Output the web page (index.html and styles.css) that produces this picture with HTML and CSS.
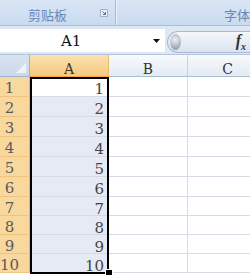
FILE: index.html
```html
<!DOCTYPE html>
<html lang="zh-CN">
<head>
    <meta charset="UTF-8">
    <meta name="viewport" content="width=device-width, initial-scale=1.0">
    <title>工作表</title>
    <link rel="stylesheet" href="styles.css">
</head>
<body>
    <div class="ribbon">
        <div class="group clipboard">
            <span class="group-label">剪贴板</span>
            <svg class="launcher" width="8" height="8" viewBox="0 0 8 8">
                <path d="M0.5 0.5h7v7h-7z" fill="#e9f0f9" stroke="#9db2cd"/>
                <path d="M2.5 2.5l3 3M5.5 3v2.5h-2.5" fill="none" stroke="#5f779b"/>
            </svg>
        </div>
        <div class="group font">
            <span class="group-label">字体</span>
        </div>
    </div>

    <div class="formula-bar">
        <div class="name-box">
            <span class="cell-ref">A1</span>
            <svg class="caret" width="7" height="4" viewBox="0 0 7 4">
                <path d="M0 0h7l-3.5 4z" fill="#111"/>
            </svg>
        </div>
        <div class="formula-input">
            <span class="knob"></span>
            <span class="fx">f<sub>x</sub></span>
        </div>
    </div>

    <div class="sheet">
        <div class="corner"></div>
        <div class="col-head active">A</div>
        <div class="col-head">B</div>
        <div class="col-head">C</div>

        <div class="row-head">1</div><div class="cell">1</div><div class="cell"></div><div class="cell"></div>
        <div class="row-head">2</div><div class="cell sel">2</div><div class="cell"></div><div class="cell"></div>
        <div class="row-head">3</div><div class="cell sel">3</div><div class="cell"></div><div class="cell"></div>
        <div class="row-head">4</div><div class="cell sel">4</div><div class="cell"></div><div class="cell"></div>
        <div class="row-head">5</div><div class="cell sel">5</div><div class="cell"></div><div class="cell"></div>
        <div class="row-head">6</div><div class="cell sel">6</div><div class="cell"></div><div class="cell"></div>
        <div class="row-head">7</div><div class="cell sel">7</div><div class="cell"></div><div class="cell"></div>
        <div class="row-head">8</div><div class="cell sel">8</div><div class="cell"></div><div class="cell"></div>
        <div class="row-head">9</div><div class="cell sel">9</div><div class="cell"></div><div class="cell"></div>
        <div class="row-head">10</div><div class="cell sel">10</div><div class="cell"></div><div class="cell"></div>

        <!-- selected range A1:A10 -->
        <div class="selection"><span class="fill-handle"></span></div>
    </div>
</body>
</html>
```

FILE: styles.css
```css
body {
    margin: 0;
    width: 250px;
    height: 275px;
    overflow: hidden;
    background: #fff;
    font-family: "DejaVu Serif", serif;
}
.ribbon {
    display: flex;
    height: 25px;
    border-bottom: 1px solid #a6bfdf;
    background: linear-gradient(#dae6f5, #c9dbf0);
}
.group {
    display: flex;
    align-items: center;
    box-sizing: border-box;
}
.clipboard {
    width: 120px;
    padding-left: 28px;
    padding-right: 7px;
    border-right: 1px solid #a3bbd9;
}
.font {
    flex: 1;
    padding-left: 108px;
    box-shadow: inset 1px 0 0 #eef4fb;
}
.group-label {
    font-family: "Noto Sans CJK SC", sans-serif;
    font-size: 13px;
    color: #6a87b5;
    padding-top: 3px;
    white-space: nowrap;
}
.launcher {
    margin-left: auto;
}
.formula-bar {
    display: flex;
    height: 29px;
    padding-top: 3px;
    box-sizing: border-box;
    background: #dee8f5;
    border-bottom: 1px solid #b4c4d8;
}
.name-box {
    display: flex;
    align-items: center;
    width: 165px;
    height: 23px;
    background: #fff;
}
.cell-ref {
    margin-left: 61px;
    font-size: 15px;
    color: #111;
}
.caret {
    margin-left: auto;
    margin-right: 5px;
}
.formula-input {
    flex: 1;
    display: flex;
    align-items: center;
    height: 22px;
    margin-top: 2px;
    margin-left: 2px;
    box-sizing: border-box;
    border: 1px solid #a9b9cf;
    border-right: none;
    border-radius: 11px 0 0 11px;
    background: linear-gradient(#f4f7fb, #d9e3f0);
}
.knob {
    width: 11px;
    height: 16px;
    margin-left: 2px;
    border-radius: 50%;
    background: radial-gradient(circle at 45% 35%, #eef1f5, #aab4c1 60%, #8793a2);
}
.fx {
    margin-left: auto;
    margin-right: 4px;
    font-family: "Liberation Serif", serif;
    font-style: italic;
    font-weight: bold;
    font-size: 16px;
    color: #333;
}
.fx sub {
    font-size: 10px;
}
.sheet {
    position: relative;
    display: grid;
    grid-template-columns: 30px 79px 79px 80px;
    grid-template-rows: 22px repeat(6, 20px) repeat(4, 19px);
    width: 268px;
}
.corner {
    position: relative;
    background: linear-gradient(#d9e3f1, #cbd8ea);
    border-right: 1px solid #9fb5cf;
    border-bottom: 1px solid #9fb5cf;
}
.corner::after {
    content: "";
    position: absolute;
    right: 3px;
    bottom: 3px;
    border-left: 10px solid transparent;
    border-bottom: 10px solid #eef3fa;
}
.col-head {
    text-align: center;
    font-size: 14px;
    line-height: 28px;
    color: #333;
    background: linear-gradient(#f8fafd, #e3eaf4);
    border-right: 1px solid #c6d3e3;
    border-bottom: 1px solid #a9bcd3;
}
.col-head.active {
    background: linear-gradient(#fbe2b4, #f6c97c);
    border-right-color: #e8b96f;
    border-bottom-color: #f0a743;
}
.row-head {
    padding-right: 10px;
    text-align: center;
    font-size: 15px;
    line-height: 22px;
    color: #5a5a5a;
    background: #f9d89e;
    border-right: 1px solid #e4b56a;
    border-bottom: 1px solid #f0c47f;
}
.cell {
    padding-right: 4px;
    text-align: right;
    font-size: 15px;
    line-height: 24px;
    color: #444;
    border-right: 1px solid #d5dbe5;
    border-bottom: 1px solid #d5dbe5;
}
.cell.sel {
    background: #e6eaf4;
}
.selection {
    position: absolute;
    left: 30px;
    top: 22px;
    width: 79px;
    height: 197px;
    box-sizing: border-box;
    border: 2px solid #000;
    pointer-events: none;
}
.fill-handle {
    position: absolute;
    left: 73px;
    top: 190px;
    width: 6px;
    height: 6px;
    background: #000;
    border: 1px solid #fff;
}
```
